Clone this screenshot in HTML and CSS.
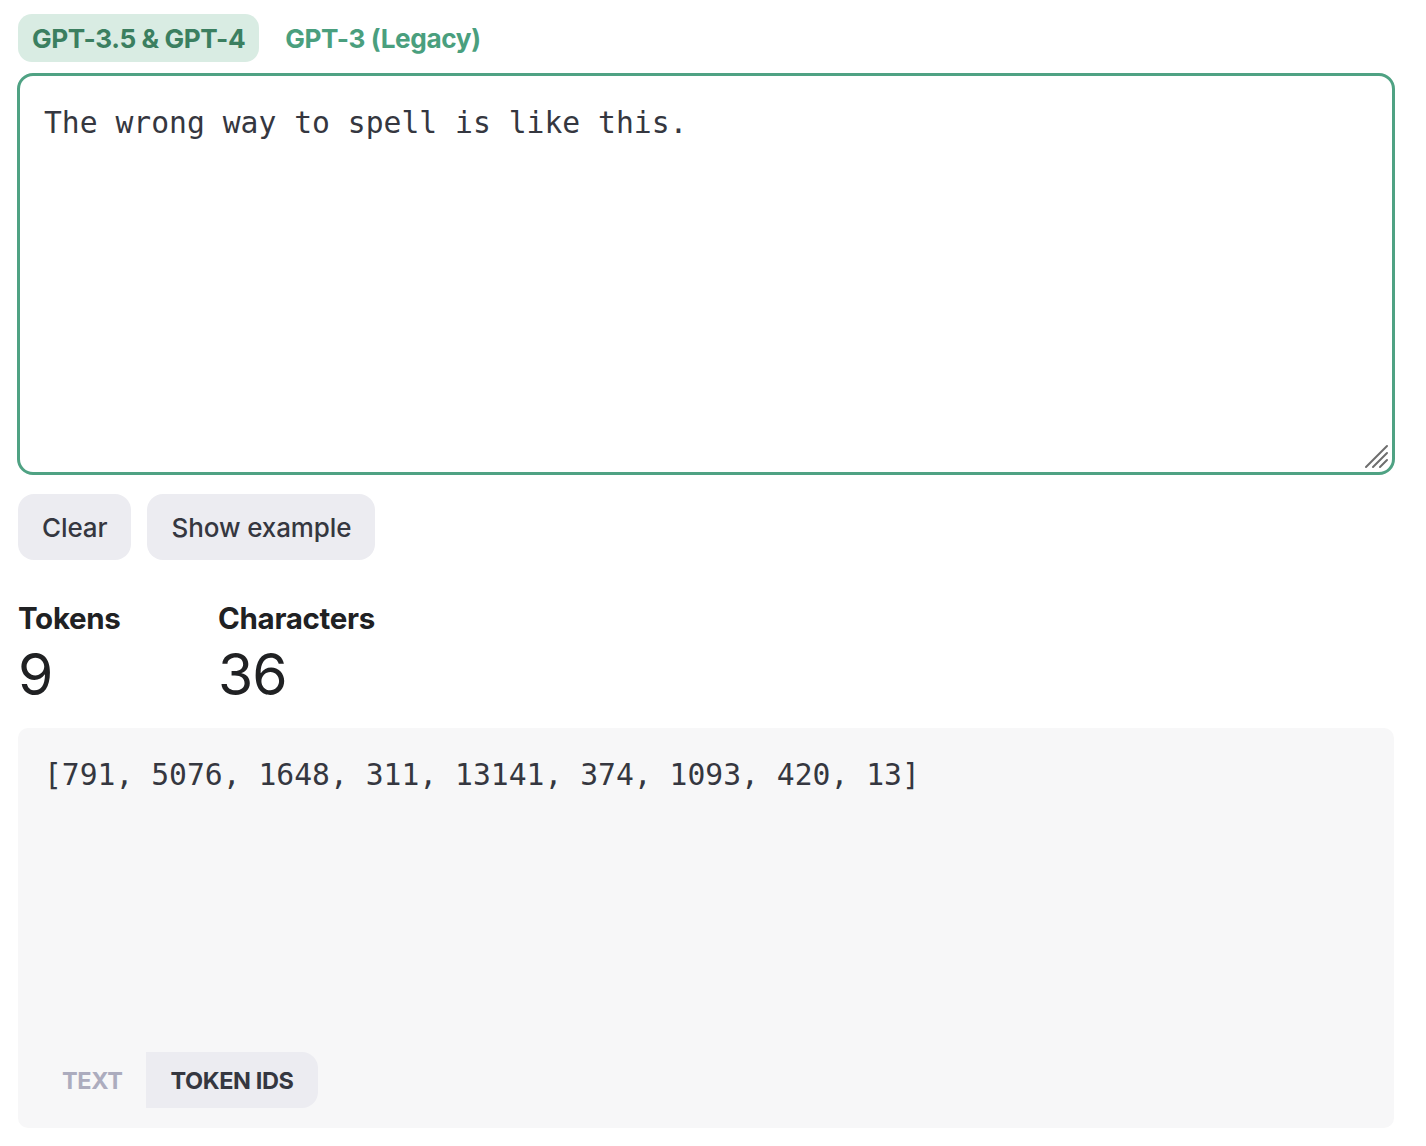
FILE: index.html
```html
<!DOCTYPE html>
<html>
<head>
<meta charset="utf-8">
<link rel="stylesheet" href="styles.css">
</head>
<body>
<div class="page">
  <div class="models">
    <button class="model active">GPT-3.5 &amp; GPT-4</button>
    <button class="model">GPT-3 (Legacy)</button>
  </div>
  <div class="input-wrap">
    <textarea class="input" spellcheck="false">The wrong way to spell is like this.</textarea>
    <svg class="grip" width="26" height="26" viewBox="0 0 26 26">
      <path d="M3 24 L24 3 M10 24 L24 10 M17 24 L24 17" stroke="#6e6e6e" stroke-width="2" stroke-linecap="round" fill="none"/>
    </svg>
  </div>
  <div class="actions">
    <button class="btn">Clear</button>
    <button class="btn">Show example</button>
  </div>
  <div class="stats">
    <div class="stat stat-tokens">
      <div class="stat-label">Tokens</div>
      <div class="stat-value">9</div>
    </div>
    <div class="stat">
      <div class="stat-label">Characters</div>
      <div class="stat-value">36</div>
    </div>
  </div>
  <div class="output">
    <div class="output-text">[791, 5076, 1648, 311, 13141, 374, 1093, 420, 13]</div>
    <div class="view-toggle">
      <button class="view">TEXT</button>
      <button class="view active">TOKEN IDS</button>
    </div>
  </div>
</div>
</body>
</html>
```

FILE: styles.css
```css
* { box-sizing: border-box; }
html, body { margin: 0; padding: 0; background: #ffffff; }
body { font-family: "Inter", "Liberation Sans", sans-serif; color: #202123; }
.page { padding: 14px 32px 0 18px; display: flex; flex-direction: column; }
button { font-family: inherit; border: none; cursor: pointer; }

.models { display: flex; gap: 12px; height: 48px; }
.model {
  background: transparent; color: #4a9f7e; font-size: 26.2px; font-weight: 700;
  padding: 0 14px; border-radius: 14px; letter-spacing: -0.4px; height: 48px;
}
.model.active { background: #d9ece3; color: #3b7f60; }

.input-wrap { position: relative; margin-top: 11px; margin-left: -1px; width: 1378px; height: 402px; }
.input {
  display: block; width: 100%; height: 100%;
  border: 3px solid #4fa283; border-radius: 16px; padding: 25px 24px;
  font-family: "DejaVu Sans Mono", "Liberation Mono", monospace; font-size: 29.7px;
  color: #353740; line-height: 44px; resize: none; outline: none; background: #fff;
}
.grip { position: absolute; right: 6px; bottom: 6px; }

.actions { display: flex; gap: 16px; margin-top: 19px; }
.btn {
  height: 66px; padding: 0 24px; background: #ececf1; color: #353740;
  border-radius: 16px; font-size: 26px; font-weight: 500; letter-spacing: -0.1px;
}

.stats { display: flex; margin-top: 40px; }
.stat-tokens { width: 200px; }
.stat-label { font-size: 29.5px; font-weight: 700; line-height: 36px; letter-spacing: -0.3px; color: #202123; }
.stat-value { font-size: 57px; font-weight: 400; line-height: 64px; margin-top: 7px; color: #202123; letter-spacing: -1px; }

.output {
  margin-top: 21px; height: 400px; width: 1376px; background: #f7f7f8; border-radius: 10px;
  display: flex; flex-direction: column; justify-content: space-between; padding: 24px 0 20px 0;
}
.output-text {
  padding: 0 26px; font-family: "DejaVu Sans Mono", "Liberation Mono", monospace;
  font-size: 29.7px; line-height: 46px; color: #353740;
}
.view-toggle { display: flex; padding-left: 20px; }
.view {
  height: 56px; padding: 0 24px; background: transparent; color: #acacbe;
  font-size: 23.5px; font-weight: 700; letter-spacing: -0.4px; border-radius: 0 16px 16px 0;
}
.view.active { background: #ececf1; color: #353740; }
```
